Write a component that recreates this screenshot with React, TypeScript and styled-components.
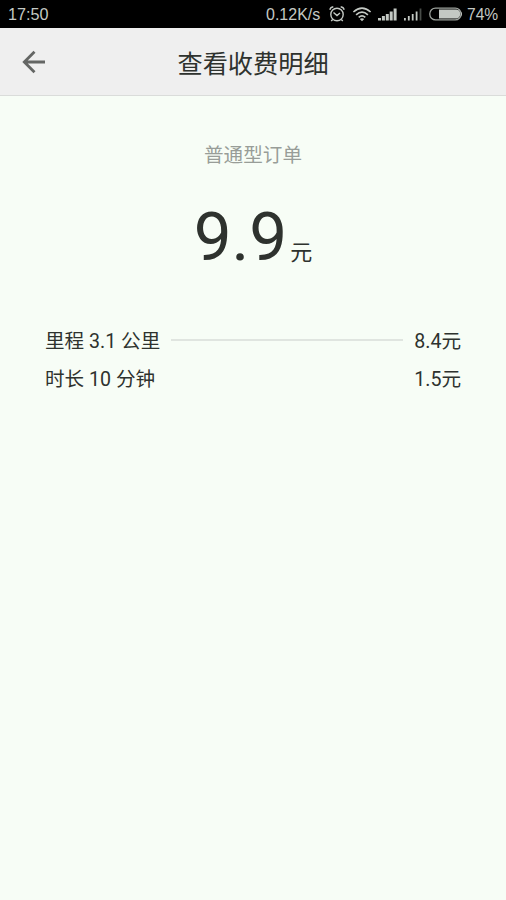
import React from "react";
import styled, { createGlobalStyle } from "styled-components";

const GlobalStyle = createGlobalStyle`
  body { margin: 0; background: #f7fdf6; }
  * { box-sizing: border-box; }
`;

const Screen = styled.div`
  width: 100%;
  height: 900px;
  display: flex;
  flex-direction: column;
  overflow: hidden;
  background: #f7fdf6;
  color: #2e322e;
  font-family: Roboto, "Noto Sans CJK SC", sans-serif;
`;

const StatusBar = styled.div`
  height: 28px;
  flex: none;
  display: flex;
  align-items: center;
  justify-content: space-between;
  padding: 0 8px;
  background: #000;
  color: #c4c9c4;
  font: 16px/28px "Liberation Sans", sans-serif;
`;

const StatusGroup = styled.div`
  display: flex;
  align-items: center;
  height: 28px;
`;

const StatusText = styled.span<{ $width: number; $gap?: number; $size?: number }>`
  width: ${(p) => p.$width}px;
  height: 28px;
  margin-left: ${(p) => p.$gap ?? 0}px;
  padding-top: 1px;
  font-size: ${(p) => p.$size ?? 16}px;
  line-height: 27px;
  white-space: nowrap;
`;

const StatusIcon = styled.svg<{ $gap: number }>`
  display: block;
  flex: none;
  margin-left: ${(p) => p.$gap}px;
`;

const Header = styled.header`
  height: 68px;
  flex: none;
  display: grid;
  grid-template-columns: 68px 1fr 68px;
  align-items: center;
  background: #efefef;
  border-bottom: 1px solid #dadcda;
`;

const BackButton = styled.button`
  display: flex;
  width: 68px;
  height: 66px;
  padding: 0 0 0 21px;
  align-items: center;
  border: 0;
  background: none;
`;

const Title = styled.h1`
  margin: 0;
  padding-top: 6px;
  text-align: center;
  font-size: 25.2px;
  line-height: 36px;
  font-weight: 400;
`;

const OrderType = styled.div`
  margin-top: 46px;
  text-align: center;
  font-size: 19.6px;
  line-height: 28px;
  color: #989d98;
`;

const Total = styled.div`
  display: flex;
  justify-content: center;
  align-items: baseline;
  height: 80px;
  margin-top: 27px;
  line-height: 80px;
`;

const Amount = styled.span`
  font-size: 67.4px;
`;

const Unit = styled.span`
  margin-left: 3px;
  font-size: 22px;
`;

const FeeList = styled.div`
  display: flex;
  flex-direction: column;
  padding: 46px 45px 0;
`;

const FeeRow = styled.div`
  display: flex;
  align-items: center;
  justify-content: space-between;
  height: 38px;
  font-size: 19.6px;
  line-height: 38px;
  white-space: nowrap;
`;

const Rule = styled.span`
  flex: 1;
  height: 2px;
  margin: 0 11px 4px;
  background: #e0e5e0;
`;

const ink = "#c4c9c4";

const fees = [
  { label: "里程 3.1 公里", price: "8.4元", ruled: true },
  { label: "时长 10 分钟", price: "1.5元", ruled: false },
];

const Alarm = () => (
  <StatusIcon $gap={7} width="18" height="18" viewBox="0 0 18 18" fill="none" stroke={ink} strokeWidth="1.4">
    <circle cx="9" cy="9.5" r="6.2" />
    <path d="M5.5 7.5 9 10.5 12 8M1.8 4.8Q2.5 2.2 5.3 1.8M12.7 1.8Q15.5 2.2 16.2 4.8M4.7 14.5 3.2 16M13.3 14.5 14.8 16" />
  </StatusIcon>
);

const Wifi = () => (
  <StatusIcon $gap={6} width="20" height="16" viewBox="0 0 20 16" fill="none" stroke={ink} strokeWidth="1.6">
    <path d="M1.4 6Q10-1.8 18.6 6M4.1 8.8Q10 3.4 15.9 8.8M6.7 11.4Q10 8.4 13.3 11.4" />
    <path d="M7.8 13Q10 11.4 12.2 13L10 15.2Z" fill={ink} stroke="none" />
  </StatusIcon>
);

const Signal = ({ bars, gap, thin }: { bars: number; gap: number; thin?: boolean }) => (
  <StatusIcon $gap={gap} width="19" height="13" viewBox="0 0 19 13">
    {[2.5, 4.5, 6.5, 9, 12].map((h, i) => (
      <rect key={h} x={i * 3.9} y={12.5 - h} width={thin ? 1.8 : 3} height={h} fill={i < bars ? ink : "#484c48"} />
    ))}
  </StatusIcon>
);

const Battery = () => (
  <StatusIcon $gap={6} width="34" height="14" viewBox="0 0 34 14">
    <rect x="0.8" y="1.1" width="31.2" height="11.8" rx="5.7" fill="none" stroke="#9ca19c" strokeWidth="1.3" />
    <path d="M10 2.6H27.5Q31.2 3 31.2 7T27.5 11.4H10Z" fill={ink} />
    <path d="M32 4.5Q34 7 32 9.5Z" fill={ink} />
  </StatusIcon>
);

export default function App() {
  return (
    <>
      <GlobalStyle />
      <Screen>
        <StatusBar>
          <StatusText $width={42} $size={16.2}>17:50</StatusText>
          <StatusGroup>
            <StatusText $width={55}>0.12K/s</StatusText>
            <Alarm />
            <Wifi />
            <Signal bars={5} gap={6} />
            <Signal bars={4} gap={7} thin />
            <Battery />
            <StatusText $width={31} $gap={4} $size={15.6}>74%</StatusText>
          </StatusGroup>
        </StatusBar>
        <Header>
          <BackButton aria-label="返回">
            <svg width="26" height="24" viewBox="0 0 26 24" fill="none" stroke="#646664" strokeWidth="2.8">
              <path d="M24 12H3M13.5 1.8 3.3 12 13.5 22.2" />
            </svg>
          </BackButton>
          <Title>查看收费明细</Title>
        </Header>
        <OrderType>普通型订单</OrderType>
        <Total>
          <Amount>9.9</Amount>
          <Unit>元</Unit>
        </Total>
        <FeeList>
          {fees.map((fee) => (
            <FeeRow key={fee.label}>
              <span>{fee.label}</span>
              {fee.ruled && <Rule />}
              <span>{fee.price}</span>
            </FeeRow>
          ))}
        </FeeList>
      </Screen>
    </>
  );
}
